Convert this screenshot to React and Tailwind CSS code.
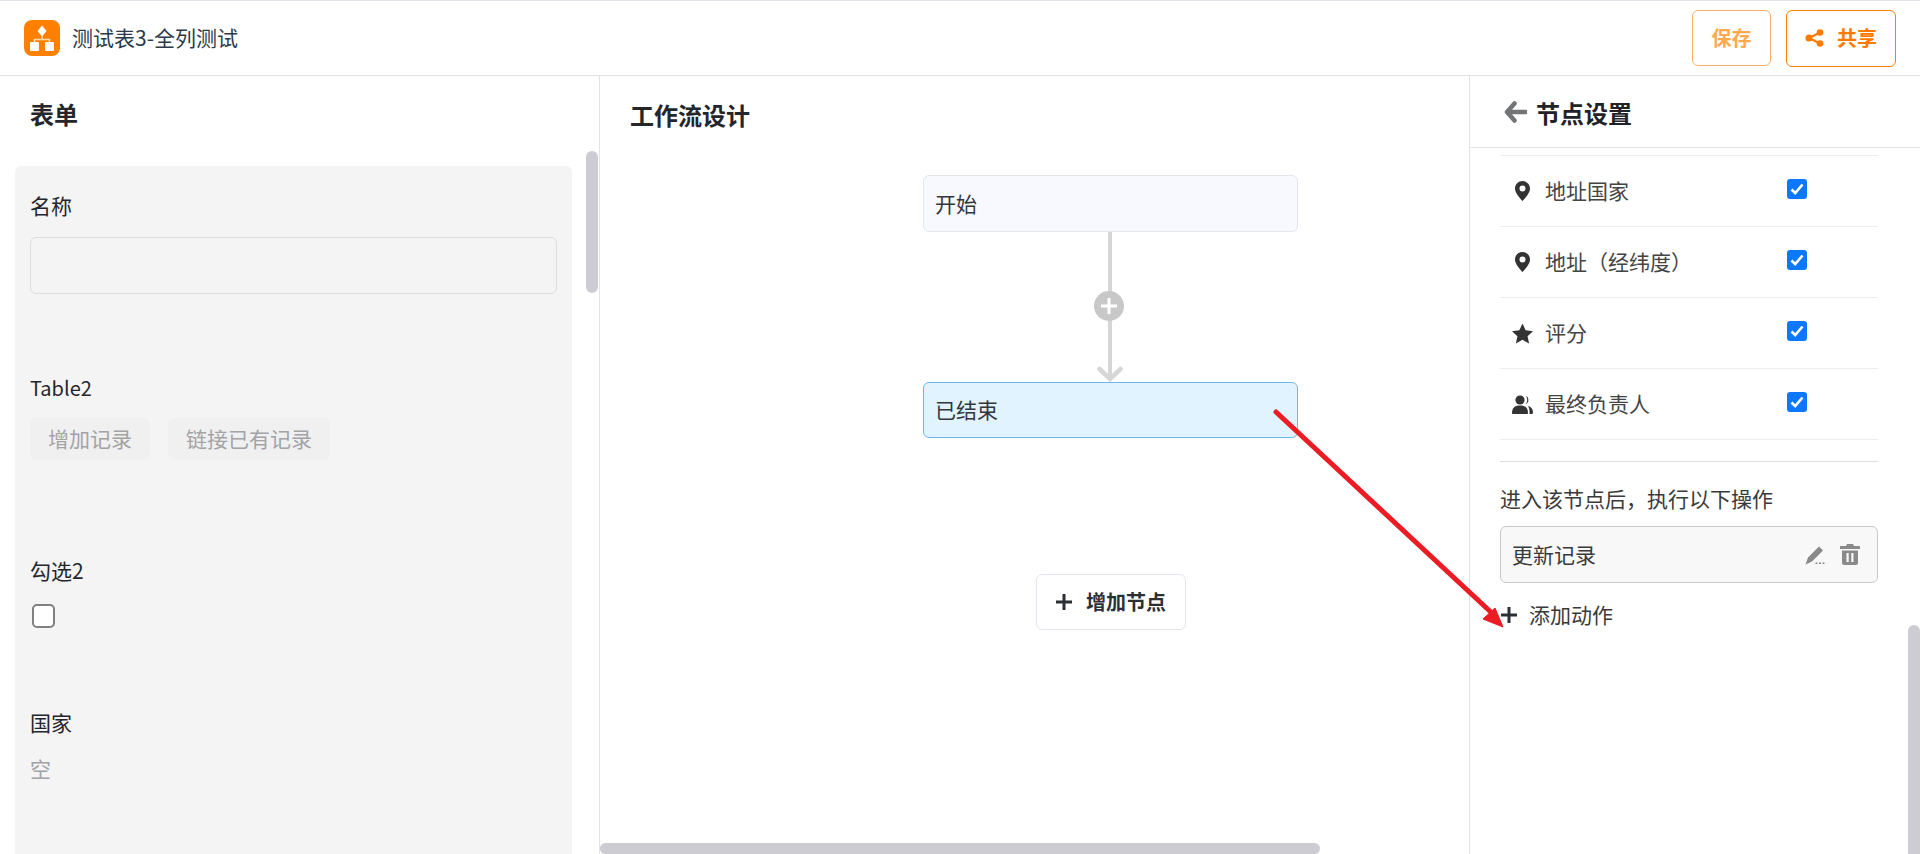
const font = { fontFamily: '"Noto Sans CJK SC", "Liberation Sans", sans-serif' };

/* ── ICONS ───────────────────────────────────────────────────────────── */
function Logo() {
  return (
    <div className="w-9 h-9 rounded-lg bg-[#ff8000] flex items-center justify-center">
      <svg width="28" height="28" viewBox="0 0 28 28">
        <path d="M14 1.5 18.5 7 14 12.5 9.5 7Z" fill="#fff" />
        <path d="M14 12v3.5M6.5 19v-3.5h15V19" stroke="#ffd9a8" strokeWidth="1.6" fill="none" />
        <rect x="2" y="18" width="9" height="9" rx="1" fill="#fff" />
        <rect x="17" y="18" width="9" height="9" rx="1" fill="#fff" />
      </svg>
    </div>
  );
}

function Pin() {
  return (
    <svg width="15" height="20" viewBox="0 0 15 20">
      <path fillRule="evenodd" fill="#333" d="M7.5 0C3.4 0 0 3.3 0 7.4c0 4.6 5 9.7 7.5 12.6C10 17.1 15 12 15 7.4 15 3.3 11.6 0 7.5 0Zm0 4.4a3 3 0 1 1 0 6 3 3 0 0 1 0-6Z" />
    </svg>
  );
}

function Star() {
  return (
    <svg width="21" height="21" viewBox="0 0 20 20">
      <path fill="#333" d="M10 .5 13 7l7 .8-5.200 4.700 1.500 7L10 16l-6.300 3.500 1.500-7L0 7.800 7 7Z" />
    </svg>
  );
}

function Users() {
  return (
    <svg width="21" height="19" viewBox="0 0 21 19">
      <circle cx="8" cy="5" r="4.600" fill="#333" />
      <path fill="#333" d="M0 18c0-5 2.500-7.500 8-7.500s8 2.500 8 7.500c0 .6-.4 1-1 1H1c-.6 0-1-.4-1-1Z" />
      <path fill="#333" d="M13.500.8a4.500 4.500 0 0 1 0 8.400c1-1 1.700-2.500 1.700-4.200s-.7-3.200-1.700-4.200ZM16 11c3 .6 5 3 5 6.500 0 .8-.5 1.500-1.300 1.500H17.500c.3-3-.2-5.800-1.500-8Z" />
    </svg>
  );
}

function Plus({ size = 18, color = "#2b2f36", width = 3 }) {
  return (
    <svg width={size} height={size} viewBox="0 0 18 18">
      <path d="M9 1v16M1 9h16" stroke={color} strokeWidth={width} fill="none" />
    </svg>
  );
}

/* ── LEFT PANEL ──────────────────────────────────────────────────────── */
function FormPanel() {
  return (
    <div className="relative w-[600px] shrink-0 border-r border-[#e2e3e8] overflow-hidden">
      <h2 className="pl-[30px] pt-[23px] h-[90px] text-[24px] leading-[30px] font-bold text-[#24262b]">表单</h2>
      <div className="ml-[15px] w-[557px] h-[700px] rounded-t-md bg-[#f4f4f5] px-[15px]">
        <div className="pt-[23px] text-[21px] leading-[32px] text-[#24262b]">名称</div>
        <div className="mt-[16px] h-[57px] rounded-md border border-[#dcdde3]"></div>
        <div className="mt-[78px] text-[20px] leading-[32px] text-[#24262b]">Table2</div>
        <div className="mt-[14px] flex gap-[18px]">
          <div className="h-[42px] w-[120px] rounded-md bg-[#f0f0f1] flex items-center justify-center text-[21px] text-[#a3a3a6]">增加记录</div>
          <div className="h-[42px] w-[162px] rounded-md bg-[#f0f0f1] flex items-center justify-center text-[21px] text-[#a3a3a6]">链接已有记录</div>
        </div>
        <div className="mt-[94px] text-[21px] leading-[32px] text-[#24262b]">勾选2</div>
        <div className="mt-[18px] ml-[2px] w-[23px] h-[24px] rounded-[5px] border-2 border-[#808080] bg-white"></div>
        <div className="mt-[78px] text-[21px] leading-[32px] text-[#24262b]">国家</div>
        <div className="mt-[14px] text-[21px] leading-[32px] text-[#a3a3a6]">空</div>
      </div>
      <div className="absolute right-[1px] top-[75px] w-[12px] h-[142px] rounded-full bg-[#cdccd3]"></div>
    </div>
  );
}

/* ── WORKFLOW ────────────────────────────────────────────────────────── */
function Connector() {
  return (
    <svg width="34" height="150" viewBox="0 0 34 150" className="block">
      <path d="M16 0V148" stroke="#d6d6d6" strokeWidth="4" fill="none" />
      <path d="M5.500 137 16 147 26.500 137" stroke="#d6d6d6" strokeWidth="4.500" strokeLinecap="round" fill="none" />
      <circle cx="15" cy="74" r="15" fill="#c8c8c8" />
      <path d="M15 66v16M7 74h16" stroke="#fff" strokeWidth="3" />
    </svg>
  );
}

function WorkflowPanel() {
  return (
    <div className="relative flex-1 min-w-0 overflow-hidden">
      <h2 className="pl-[30px] pt-[24px] h-[99px] text-[24px] leading-[30px] font-bold text-[#24262b]">工作流设计</h2>
      <div className="ml-[323px] w-[375px] flex flex-col items-center">
        <div className="w-[375px] h-[57px] rounded-md border border-[#e4e6ee] bg-[#f8f9fe] flex items-center px-[11px] text-[21px] text-[#33363b]">开始</div>
        <Connector />
        <div className="w-[375px] h-[56px] rounded-md border border-[#6cb8ee] bg-[#e0f3fe] flex items-center px-[11px] text-[21px] text-[#33363b]">已结束</div>
        <button className="mt-[136px] w-[150px] h-[56px] rounded-md border border-[#e2e5ee] bg-white flex items-center justify-center gap-[13px] text-[20px] font-bold text-[#2b2f36]">
          <Plus /> 增加节点
        </button>
      </div>
      <div className="absolute left-0 bottom-0 w-[720px] h-[11px] rounded-full bg-[#cdccd3]"></div>
    </div>
  );
}

/* ── NODE SETTINGS ───────────────────────────────────────────────────── */
const fields = [
  { icon: <Pin />, label: "地址国家" },
  { icon: <Pin />, label: "地址（经纬度）" },
  { icon: <Star />, label: "评分" },
  { icon: <Users />, label: "最终负责人" },
];

function SettingsPanel() {
  return (
    <div className="relative w-[451px] shrink-0 border-l border-[#e2e3e8] overflow-hidden">
      <div className="h-[72px] border-b border-[#e4e4e6] flex items-center pl-[34px] gap-[9px]">
        <svg width="23" height="22" viewBox="0 0 23 22">
          <path d="M10.500 2.500 3 11l7.500 8.500M4 11h18" stroke="#737476" strokeWidth="4.500" strokeLinecap="round" strokeLinejoin="round" fill="none" />
        </svg>
        <h2 className="mt-[2px] text-[24px] leading-[30px] font-bold text-[#1f2329]">节点设置</h2>
      </div>
      <div className="mt-[7px] ml-[30px] w-[378px]">
        {fields.map((f) => (
          <div key={f.label} className="h-[71px] border-t border-[#eeeeef] flex items-center">
            <div className="w-[45px] pl-[12px]">
              <div className="w-[21px] flex items-center justify-center">{f.icon}</div>
            </div>
            <span className="flex-1 text-[21px] text-[#444]">{f.label}</span>
            <div className="mr-[71px] -mt-[4px] w-[20px] h-[20px] rounded-[3px] bg-[#0b78ff] flex items-center justify-center">
              <svg width="14" height="12" viewBox="0 0 14 12">
                <path d="M1.500 6.500 5.200 10 12.500 1.500" stroke="#fff" strokeWidth="2.600" fill="none" />
              </svg>
            </div>
          </div>
        ))}
        <div className="border-t border-[#eeeeef] h-[22px]"></div>
        <div className="border-t border-[#dedee0] pt-[18px] text-[21px] leading-[36px] text-[#3a3a3a]">进入该节点后，执行以下操作</div>
        <div className="mt-[10px] h-[57px] rounded-md border border-[#c9c9c9] bg-[#f8f8f8] flex items-center pl-[11px] pr-[17px]">
          <span className="flex-1 text-[21px] text-[#3a3a3a]">更新记录</span>
          <svg width="20" height="20" viewBox="0 0 20 20" className="mr-[15px]">
            <path fill="#8a8a8a" d="M14 1.500 18 5.500 7 16.500 0.500 19.500 3 12.500ZM10.500 19h2v-1.500h-2ZM14 19h2v-1.500h-2ZM17.500 19h2v-1.500h-2Z" />
          </svg>
          <svg width="20" height="21" viewBox="0 0 20 21">
            <path fillRule="evenodd" fill="#8a8a8a" d="M7 0h6l1 2h6v3H0V2h6ZM2 6.500h16V19c0 1.100-.9 2-2 2H4c-1.100 0-2-.9-2-2ZM6.500 9v9h2.200V9ZM11.300 9v9h2.200V9Z" />
          </svg>
        </div>
        <div className="mt-[16px] flex items-center gap-[11px] text-[21px] text-[#3a3a3a]">
          <Plus />
          <span>添加动作</span>
        </div>
      </div>
      <div className="absolute right-0 bottom-0 w-[12px] h-[229px] rounded-t-full bg-[#cdccd3]"></div>
    </div>
  );
}

export default function App() {
  return (
    <div className="relative h-screen overflow-hidden bg-white flex flex-col" style={font}>
      <header className="h-[76px] shrink-0 border-t border-b border-[#e2e3e8] flex items-center pl-[24px] pr-[24px]">
        <Logo />
        <span className="ml-[12px] text-[21px] text-[#2a3a4a]">测试表3-全列测试</span>
        <div className="ml-auto flex items-center gap-[15px]">
          <button className="w-[79px] h-[56px] rounded-md border border-[#ffb066] text-[20px] font-bold text-[#ffa94d]">保存</button>
          <button className="w-[110px] h-[57px] rounded-md border border-[#ff8000] flex items-center justify-center gap-[13px] text-[20px] font-bold text-[#ff7a00]">
            <svg width="19" height="18" viewBox="0 0 19 18">
              <path d="M15 3.500 4 9l11 5.500" stroke="#ff7a00" strokeWidth="2.200" fill="none" />
              <circle cx="15" cy="3.500" r="3.300" fill="#ff7a00" />
              <circle cx="4" cy="9" r="3.600" fill="#ff7a00" />
              <circle cx="15" cy="14.500" r="3.300" fill="#ff7a00" />
            </svg>
            共享
          </button>
        </div>
      </header>
      <main className="flex flex-1 min-h-0">
        <FormPanel />
        <WorkflowPanel />
        <SettingsPanel />
      </main>
      {/* red annotation arrow over the page */}
      <svg className="absolute inset-0 pointer-events-none" width="1920" height="854" viewBox="0 0 1920 854">
        <path d="M1276 412 1494 615" stroke="#ed1c24" strokeWidth="5" strokeLinecap="round" fill="none" />
        <path d="M1503 627 1483 619 1495 608Z" fill="#ed1c24" stroke="#ed1c24" strokeWidth="1" />
      </svg>
    </div>
  );
}
